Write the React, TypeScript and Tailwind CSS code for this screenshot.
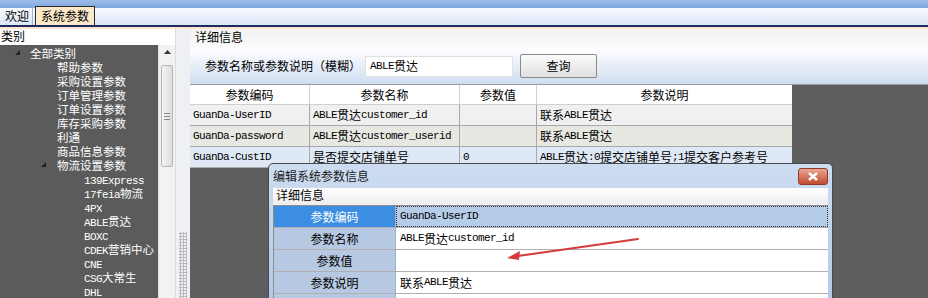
import React from "react";

const cjk = '"Noto Sans CJK SC", "Noto Sans", sans-serif';
const mono = '"Liberation Mono", "Noto Sans CJK SC", monospace';

function Mono({ children }: { children: React.ReactNode }) {
  return (
    <span style={{ fontFamily: mono }} className="text-[11px] tracking-[-0.6px]">
      {children}
    </span>
  );
}

const treeTop = [
  "帮助参数",
  "采购设置参数",
  "订单管理参数",
  "订单设置参数",
  "库存采购参数",
  "利通",
  "商品信息参数",
];

const treeSub: React.ReactNode[] = [
  <Mono>139Express</Mono>,
  <><Mono>17feia</Mono>物流</>,
  <Mono>4PX</Mono>,
  <><Mono>ABLE</Mono>贯达</>,
  <Mono>BOXC</Mono>,
  <><Mono>CDEK</Mono>营销中心</>,
  <Mono>CNE</Mono>,
  <><Mono>CSG</Mono>大常生</>,
  <Mono>DHL</Mono>,
];

function Expander() {
  return (
    <svg width="8" height="8" viewBox="0 0 8 8" className="shrink-0">
      <path d="M6 1 L6 6 L1 6 Z" fill="#222" />
    </svg>
  );
}

function ScrollBar() {
  return (
    <div className="w-[17px] flex flex-col bg-[#f2f2f2] border-l border-[#e0e0e0]">
      <div className="h-[14px] flex items-center justify-center">
        <svg width="7" height="4" viewBox="0 0 7 4">
          <path d="M0 4 L3.5 0 L7 4 Z" fill="#333" />
        </svg>
      </div>
      <div className="h-[6px]" />
      <div className="mx-[2px] h-[102px] rounded-[2px] border border-[#b5b5b5] bg-gradient-to-r from-[#f4f4f4] to-[#dcdcdc] flex items-center justify-center">
        <div className="flex flex-col gap-[2px]">
          <div className="w-[6px] h-px bg-[#888]" />
          <div className="w-[6px] h-px bg-[#888]" />
          <div className="w-[6px] h-px bg-[#888]" />
        </div>
      </div>
      <div className="flex-1" />
    </div>
  );
}

const rows = [
  { code: "GuanDa-UserID", name: <><Mono>ABLE</Mono>贯达<Mono>customer_id</Mono></>, val: "", desc: <>联系<Mono>ABLE</Mono>贯达</>, bg: "bg-[#f0f0f0]" },
  { code: "GuanDa-password", name: <><Mono>ABLE</Mono>贯达<Mono>customer_userid</Mono></>, val: "", desc: <>联系<Mono>ABLE</Mono>贯达</>, bg: "bg-[#e8e8e3]" },
  { code: "GuanDa-CustID", name: <>是否提交店铺单号</>, val: "0", desc: <><Mono>ABLE</Mono>贯达<Mono>:0</Mono>提交店铺单号<Mono>;1</Mono>提交客户参考号</>, bg: "bg-[#dfe9f5]" },
];

function TreeRow({ pad, children }: { pad: string; children: React.ReactNode }) {
  return (
    <div className={`h-[14px] flex items-center whitespace-nowrap overflow-hidden ${pad}`}>
      <span className="block h-[14px] leading-[14px] text-[11.5px] overflow-hidden">{children}</span>
    </div>
  );
}

export default function App() {
  return (
    <div className="w-[928px] h-[298px] overflow-hidden relative bg-[#f4f4f4] text-[12px] text-black" style={{ fontFamily: cjk }}>
      {/* top title bar */}
      <div className="h-[8px] bg-gradient-to-b from-[#9dbde9] to-[#7ea5dd]" />
      {/* tab strip */}
      <div className="h-[19px] flex items-end bg-gradient-to-b from-[#f8fbff] to-[#dbe6f6] border-b-2 border-[#1d2a5c] pl-[2px]">
        <div className="h-[18px] px-[3px] flex items-center border-r border-[#9fb3d3] leading-none">欢迎</div>
        <div className="ml-[2px] h-[19px] px-[5px] flex items-center bg-[#fde9c9] border border-b-0 border-[#2a2a2a] leading-none">系统参数</div>
      </div>
      <div className="h-[2px] bg-[#fbe3d2]" />
      {/* body */}
      <div className="flex h-[269px]">
        {/* left panel */}
        <div className="w-[175px] flex flex-col bg-white">
          <div className="h-[16px] pl-[1px] leading-[14px] bg-white">类别</div>
          <div className="flex-1 flex overflow-hidden">
            <div className="w-[158px] bg-[#5b5b5b] text-white pt-[1px]">
              <div className="h-[14px] flex items-center">
                <div className="w-[30px] pl-[14px] flex items-center"><Expander /></div>
                <span className="block h-[14px] leading-[14px] text-[11.5px] overflow-hidden">全部类别</span>
              </div>
              {treeTop.map((t) => (
                <TreeRow key={t} pad="pl-[57px]">{t}</TreeRow>
              ))}
              <div className="h-[14px] flex items-center">
                <div className="w-[57px] pl-[40px] flex items-center"><Expander /></div>
                <span className="block h-[14px] leading-[14px] text-[11.5px] overflow-hidden">物流设置参数</span>
              </div>
              {treeSub.map((t, i) => (
                <TreeRow key={i} pad="pl-[84px]">{t}</TreeRow>
              ))}
            </div>
            <ScrollBar />
          </div>
        </div>
        {/* splitter */}
        <div className="w-[15px] flex flex-col bg-[#eef0f3] border-l border-[#dcdcdc]">
          <div className="flex-1" />
          <div className="h-[66px] mx-[3px] mb-0 bg-[radial-gradient(#b9b9b9_1px,transparent_1.2px)] bg-[length:3px_3px]" />
        </div>
        {/* right panel */}
        <div className="flex-1 flex flex-col relative">
          <div className="h-[19px] pl-[5px] leading-[16px] bg-gradient-to-b from-[#f2f2f2] to-[#fafafa]">详细信息</div>
          <div className="h-[36px] flex items-center bg-gradient-to-b from-[#ffffff] to-[#cfddf1]">
            <span className="ml-[15px] w-[160px]">参数名称或参数说明（模糊）</span>
            <div className="w-[148px] h-[21px] bg-white border border-[#e0e0e0] flex items-center pl-[4px]">
              <Mono>ABLE</Mono>贯达
            </div>
            <div className="ml-[7px] w-[77px] h-[24px] rounded-[2px] border border-[#8a8a8a] bg-gradient-to-b from-[#fbfbfb] to-[#e0e0e0] flex items-center justify-center">查询</div>
          </div>
          <div className="flex-1 flex bg-[#5e5e5e] border-t border-[#9a9a9a]">
            <div className="w-[602px] self-start flex flex-col bg-white">
              <div className="flex h-[20px] bg-white border-b border-[#cfcfcf]">
                <div className="w-[120px] text-center leading-[20px] border-r border-[#cfcfcf]">参数编码</div>
                <div className="w-[150px] text-center leading-[20px] border-r border-[#cfcfcf]">参数名称</div>
                <div className="w-[77px] text-center leading-[20px] border-r border-[#cfcfcf]">参数值</div>
                <div className="flex-1 text-center leading-[20px]">参数说明</div>
              </div>
              {rows.map((r, i) => (
                <div key={i} className={`flex h-[21px] ${r.bg} border-b border-[#a8a8a8]`}>
                  <div className="w-[120px] pl-[3px] flex items-center border-r border-[#a8a8a8] whitespace-nowrap"><Mono>{r.code}</Mono></div>
                  <div className="w-[150px] pl-[3px] flex items-center border-r border-[#a8a8a8] whitespace-nowrap">{r.name}</div>
                  <div className="w-[77px] pl-[3px] flex items-center border-r border-[#a8a8a8]"><Mono>{r.val}</Mono></div>
                  <div className="flex-1 pl-[3px] flex items-center whitespace-nowrap">{r.desc}</div>
                </div>
              ))}
            </div>
          </div>
        </div>
      </div>

      {/* dialog */}
      <div className="absolute left-[268px] top-[163px] w-[565px] h-[140px] rounded-t-[5px] border border-[#4a4a4a] bg-gradient-to-b from-[#cddcf0] to-[#b3c9e8] flex flex-col">
        <div className="h-[24px] flex items-center pl-[4px] relative">
          <span className="text-[#1a1a1a]">编辑系统参数信息</span>
          <div className="absolute right-[4px] top-[4px] w-[30px] h-[17px] rounded-[3px] border border-[#8f3b28] bg-gradient-to-b from-[#e9a591] to-[#c24a2f] flex items-center justify-center">
            <svg width="10" height="9" viewBox="0 0 10 9">
              <path d="M1 1 L9 8 M9 1 L1 8" stroke="white" strokeWidth="2.4" />
            </svg>
          </div>
        </div>
        <div className="flex-1 mx-[4px] bg-[#f0f0f0] flex flex-col">
          <div className="h-[16px] pl-[3px] leading-[14px] bg-gradient-to-b from-[#ffffff] to-[#eeeeee]">详细信息</div>
          <div className="flex-1 flex flex-col bg-white border-t border-l border-[#8d8d8d] mt-[1px]">
            <div className="flex h-[22px] border-b border-[#b0b0b0]">
              <div className="w-[122px] bg-[#3c8ee2] text-white flex items-center justify-center border-r border-[#9fb3cc]">参数编码</div>
              <div className="flex-1 bg-[#b6cde9] flex items-center pl-[3px] border border-dotted border-[#333]"><Mono>GuanDa-UserID</Mono></div>
            </div>
            <div className="flex h-[22px] border-b border-[#b0b0b0]">
              <div className="w-[122px] bg-[#b7c9e2] flex items-center justify-center border-r border-[#9fb3cc]">参数名称</div>
              <div className="flex-1 flex items-center pl-[4px]"><Mono>ABLE</Mono>贯达<Mono>customer_id</Mono></div>
            </div>
            <div className="flex h-[22px] border-b border-[#b0b0b0]">
              <div className="w-[122px] bg-[#b7c9e2] flex items-center justify-center border-r border-[#9fb3cc]">参数值</div>
              <div className="flex-1" />
            </div>
            <div className="flex h-[22px] border-b border-[#b0b0b0]">
              <div className="w-[122px] bg-[#b7c9e2] flex items-center justify-center border-r border-[#9fb3cc]">参数说明</div>
              <div className="flex-1 flex items-center pl-[4px]">联系<Mono>ABLE</Mono>贯达</div>
            </div>
            <div className="flex-1 flex">
              <div className="w-[122px] bg-[#b7c9e2] border-r border-[#9fb3cc]" />
              <div className="flex-1" />
            </div>
          </div>
        </div>
      </div>

      {/* red arrow annotation */}
      <svg className="absolute left-0 top-0 pointer-events-none" width="928" height="298">
        <line x1="638" y1="239" x2="518" y2="256" stroke="#d63a3a" strokeWidth="2" strokeLinecap="round" />
        <path d="M507 258 L520 251 L519 260 Z" fill="#d63a3a" />
      </svg>
    </div>
  );
}
